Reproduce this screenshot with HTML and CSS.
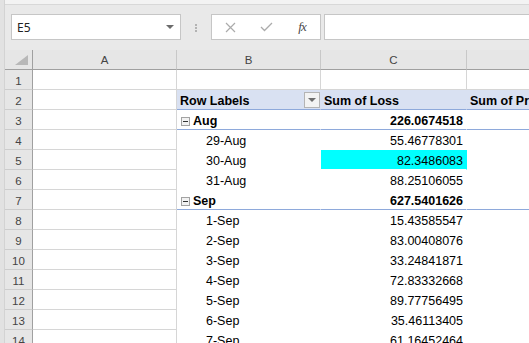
FILE: index.html
```html
<!DOCTYPE html>
<html lang="en">
<head>
    <meta charset="UTF-8">
    <title>Pivot - Sum of Loss</title>
    <link rel="stylesheet" href="styles.css">
</head>
<body>
<div class="window">
    <div class="edge"></div>
    <div class="main">
        <div class="ribbon-edge"></div>

        <div class="formula-bar">
            <div class="name-box">
                <span>E5</span>
                <span class="caret"></span>
            </div>
            <div class="grip"><i></i><i></i><i></i></div>
            <div class="fx-buttons">
                <span class="btn">
                    <svg width="11" height="11" viewBox="0 0 11 11"><path d="M1 1L10 10M10 1L1 10" stroke="#ababab" stroke-width="1.2" fill="none"/></svg>
                </span>
                <span class="btn">
                    <svg width="13" height="10" viewBox="0 0 13 10"><path d="M1 5L4.5 8.5L12 1" stroke="#ababab" stroke-width="1.3" fill="none"/></svg>
                </span>
                <span class="btn fx">fx</span>
            </div>
            <div class="formula-input"></div>
        </div>

        <div class="sheet">
            <!-- column headers -->
            <div class="c corner">
                <svg width="27" height="19" viewBox="0 0 27 19"><polygon points="10,15 23,15 23,5" fill="#b8b8b8"/></svg>
            </div>
            <div class="c ch">A</div>
            <div class="c ch">B</div>
            <div class="c ch">C</div>
            <div class="c ch">D</div>

            <!-- row 1 -->
            <div class="c rh">1</div>
            <div class="c"></div>
            <div class="c"></div>
            <div class="c"></div>
            <div class="c"></div>

            <!-- row 2 : pivot header -->
            <div class="c rh">2</div>
            <div class="c"></div>
            <div class="c pv-head labels">
                <span>Row Labels</span>
                <span class="filter"></span>
            </div>
            <div class="c pv-head">Sum of Loss</div>
            <div class="c pv-head">Sum of Profit</div>

            <!-- row 3 -->
            <div class="c rh">3</div>
            <div class="c"></div>
            <div class="c pv group"><span class="toggle"></span>Aug</div>
            <div class="c pv group num">226.0674518</div>
            <div class="c pv group"></div>

            <div class="c rh">4</div>
            <div class="c"></div>
            <div class="c pv item">29-Aug</div>
            <div class="c pv num">55.46778301</div>
            <div class="c pv"></div>

            <div class="c rh">5</div>
            <div class="c"></div>
            <div class="c pv item">30-Aug</div>
            <div class="c pv num selected">82.3486083</div>
            <div class="c pv"></div>

            <div class="c rh">6</div>
            <div class="c"></div>
            <div class="c pv item">31-Aug</div>
            <div class="c pv num">88.25106055</div>
            <div class="c pv"></div>

            <!-- row 7 -->
            <div class="c rh">7</div>
            <div class="c"></div>
            <div class="c pv group"><span class="toggle"></span>Sep</div>
            <div class="c pv group num">627.5401626</div>
            <div class="c pv group"></div>

            <div class="c rh">8</div>
            <div class="c"></div>
            <div class="c pv item">1-Sep</div>
            <div class="c pv num">15.43585547</div>
            <div class="c pv"></div>

            <div class="c rh">9</div>
            <div class="c"></div>
            <div class="c pv item">2-Sep</div>
            <div class="c pv num">83.00408076</div>
            <div class="c pv"></div>

            <div class="c rh">10</div>
            <div class="c"></div>
            <div class="c pv item">3-Sep</div>
            <div class="c pv num">33.24841871</div>
            <div class="c pv"></div>

            <div class="c rh">11</div>
            <div class="c"></div>
            <div class="c pv item">4-Sep</div>
            <div class="c pv num">72.83332668</div>
            <div class="c pv"></div>

            <div class="c rh">12</div>
            <div class="c"></div>
            <div class="c pv item">5-Sep</div>
            <div class="c pv num">89.77756495</div>
            <div class="c pv"></div>

            <div class="c rh">13</div>
            <div class="c"></div>
            <div class="c pv item">6-Sep</div>
            <div class="c pv num">35.46113405</div>
            <div class="c pv"></div>

            <div class="c rh">14</div>
            <div class="c"></div>
            <div class="c pv item">7-Sep</div>
            <div class="c pv num">61.16452464</div>
            <div class="c pv"></div>
        </div>
    </div>
</div>
</body>
</html>
```

FILE: styles.css
```css
body {
    margin: 0;
    width: 529px;
    height: 343px;
    overflow: hidden;
    background-color: #e9e9e9;
    font-family: "Liberation Sans", Arial, sans-serif;
    color: #000;
}

.window {
    display: flex;
    height: 100%;
}

.edge {
    flex: none;
    width: 4px;
    background-color: #e2e2e2;
    border-right: 1px solid #d3d3d3;
}

.main {
    flex: 1;
    min-width: 0;
    display: flex;
    flex-direction: column;
    overflow: hidden;
}

.ribbon-edge {
    flex: none;
    height: 4px;
    background-color: #f3f3f3;
    border-bottom: 1px solid #d8d8d8;
}

/* formula bar */

.formula-bar {
    flex: none;
    height: 45px;
    box-sizing: border-box;
    padding: 9px 0 0 6px;
    display: flex;
    align-items: flex-start;
}

.name-box,
.fx-buttons,
.formula-input {
    height: 26px;
    box-sizing: border-box;
    border: 1px solid #c6c6c6;
    background-color: #fff;
}

.name-box {
    width: 170px;
    display: flex;
    align-items: center;
    justify-content: space-between;
    padding: 0 6px 0 5px;
    font-family: "Noto Sans", "Liberation Sans", sans-serif;
    font-size: 12px;
    color: #222;
}

.caret {
    width: 0;
    height: 0;
    border-left: 4px solid transparent;
    border-right: 4px solid transparent;
    border-top: 4px solid #6b6b6b;
}

.grip {
    width: 30px;
    display: flex;
    flex-direction: column;
    align-items: center;
    gap: 1px;
    padding-top: 10px;
}

.grip i {
    width: 2px;
    height: 2px;
    background-color: #b3b3b3;
}

.fx-buttons {
    width: 110px;
    display: flex;
    justify-content: space-around;
    align-items: center;
}

.btn {
    width: 20px;
    display: flex;
    justify-content: center;
}

.fx {
    font-family: "Liberation Serif", "Times New Roman", serif;
    font-style: italic;
    font-size: 13px;
    color: #4a4a4a;
    letter-spacing: -1px;
}

.formula-input {
    flex: 1;
    margin-left: 3px;
    border-right: none;
}

/* sheet grid */

.sheet {
    flex: none;
    display: grid;
    grid-template-columns: 28px 144px 144px 146px 146px;
    grid-auto-rows: 20px;
    background-color: #fff;
}

.c {
    box-sizing: border-box;
    border-right: 1px solid #d6d6d6;
    border-bottom: 1px solid #d6d6d6;
    padding: 4px 3px 0;
    font-size: 12.5px;
    line-height: 14px;
    white-space: nowrap;
    overflow: hidden;
}

.corner {
    padding: 0;
    background-color: #e6e6e6;
    border-right-color: #a0a0a0;
    border-bottom-color: #a0a0a0;
}

.corner svg {
    display: block;
}

.ch,
.rh {
    background-color: #e6e6e6;
    font-size: 11.5px;
    line-height: 13px;
    color: #444;
    text-align: center;
    padding-left: 0;
    padding-right: 0;
}

.ch {
    padding-top: 3.5px;
    border-right-color: #c8c8c8;
    border-bottom-color: #a0a0a0;
}

.rh {
    padding-top: 4.5px;
    border-right-color: #a0a0a0;
    border-bottom-color: #cdcdcd;
}

/* pivot table */

.pv {
    border-right-color: #fff;
    border-bottom-color: #fff;
}

.pv-head {
    background-color: #d9e1f2;
    border-right-color: #d9e1f2;
    border-bottom-color: #8ea9db;
    font-weight: bold;
}

.labels {
    display: flex;
    justify-content: space-between;
    align-items: flex-start;
    padding-right: 0;
}

.filter {
    width: 16px;
    height: 16px;
    box-sizing: border-box;
    margin-top: -2px;
    border: 1px solid #b4b4b4;
    background-color: #f3f3f3;
    display: flex;
    align-items: center;
    justify-content: center;
}

.filter::after {
    content: "";
    border-left: 4px solid transparent;
    border-right: 4px solid transparent;
    border-top: 4px solid #6e6e6e;
}

.group {
    font-weight: bold;
    border-bottom-color: #8ea9db;
}

.toggle {
    display: inline-block;
    position: relative;
    width: 9px;
    height: 9px;
    box-sizing: border-box;
    margin: 0 3px 0 1px;
    vertical-align: -1px;
    border: 1px solid #a3a3a3;
    background-color: #f2f2f2;
}

.toggle::after {
    content: "";
    position: absolute;
    left: 1px;
    right: 1px;
    top: 3px;
    height: 1px;
    background-color: #333;
}

.item {
    padding-left: 29px;
}

.num {
    text-align: right;
}

.selected {
    background-color: #00ffff;
    border-right-color: #00ffff;
}
```
